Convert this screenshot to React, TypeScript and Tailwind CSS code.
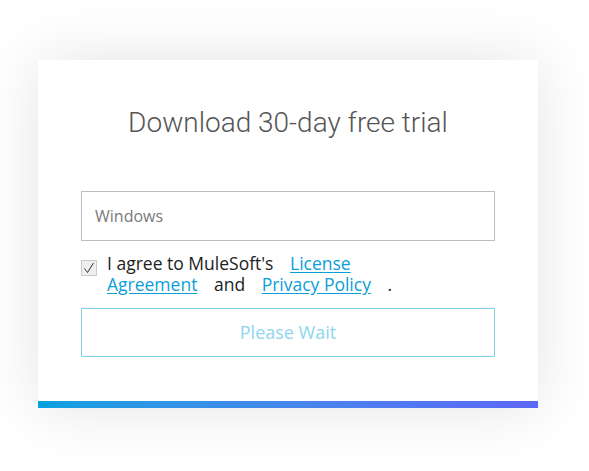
import React from "react";

export default function App() {
  return (
    <div className="min-h-[471px] w-full bg-white pt-[60px] pl-[38px]" style={{ fontFamily: '"Open Sans", sans-serif' }}>
      <div className="w-[500px] h-[348px] bg-white shadow-[0_0_60px_rgba(0,0,0,0.11)] flex flex-col">
        <div className="flex-1 px-[43px] pt-[46px] flex flex-col">
          <h1
            className="text-center text-[28px] leading-[34px] font-light text-[#555555]"
            style={{ fontFamily: 'Roboto, sans-serif' }}
          >
            Download 30-day free trial
          </h1>
          <div className="mt-[51px] h-[50px] border border-[#bdbdbd] flex items-center pl-[13px] text-[16px] text-[#7a7a7a]">
            Windows
          </div>
          <div className="mt-[12px] flex items-start">
            <div className="mt-[7px] w-[16px] h-[16px] border border-[#c9c9c9] bg-[#efefef] flex items-center justify-center shrink-0">
              <svg width="12" height="12" viewBox="0 0 12 12">
                <path d="M1.5 6.5 L4.5 10.5 L10.5 1" fill="none" stroke="#333" strokeWidth="1" />
              </svg>
            </div>
            <p className="ml-[10px] w-[300px] text-[17.5px] leading-[21px] text-[#222222]">
              I agree to MuleSoft's{" "}
              <a className="mx-3 text-[#0b9ed8] underline underline-offset-[2px]">License Agreement</a>{" "}
              and{" "}
              <a className="mx-3 text-[#0b9ed8] underline underline-offset-[2px]">Privacy Policy</a>{" "}
              .
            </p>
          </div>
          <div className="mt-[13px] h-[49px] border border-[#84cfea] flex items-center justify-center text-[18px] text-[#8ed6f1]">
            Please Wait
          </div>
        </div>
        <div className="h-[7px] bg-gradient-to-r from-[#03a1df] to-[#5c67f7]" />
      </div>
    </div>
  );
}
